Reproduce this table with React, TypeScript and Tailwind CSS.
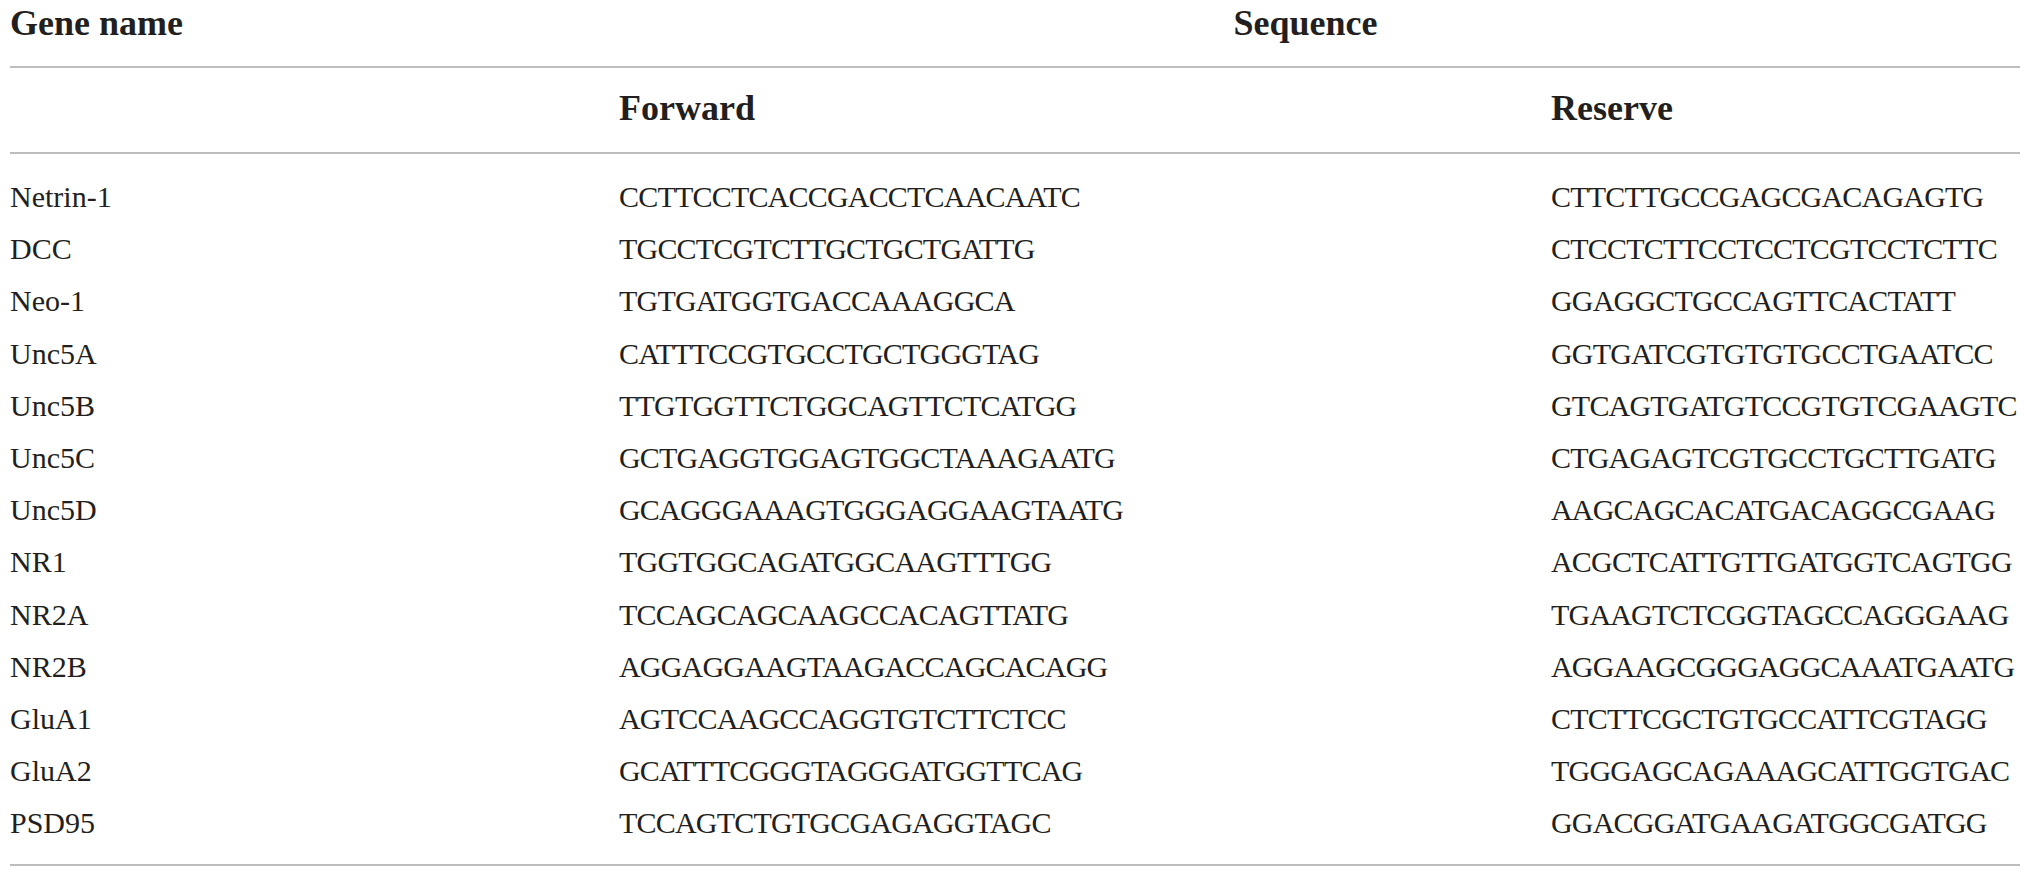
const rows: [string, string, string][] = [
  ["Netrin-1", "CCTTCCTCACCGACCTCAACAATC", "CTTCTTGCCGAGCGACAGAGTG"],
  ["DCC", "TGCCTCGTCTTGCTGCTGATTG", "CTCCTCTTCCTCCTCGTCCTCTTC"],
  ["Neo-1", "TGTGATGGTGACCAAAGGCA", "GGAGGCTGCCAGTTCACTATT"],
  ["Unc5A", "CATTTCCGTGCCTGCTGGGTAG", "GGTGATCGTGTGTGCCTGAATCC"],
  ["Unc5B", "TTGTGGTTCTGGCAGTTCTCATGG", "GTCAGTGATGTCCGTGTCGAAGTC"],
  ["Unc5C", "GCTGAGGTGGAGTGGCTAAAGAATG", "CTGAGAGTCGTGCCTGCTTGATG"],
  ["Unc5D", "GCAGGGAAAGTGGGAGGAAGTAATG", "AAGCAGCACATGACAGGCGAAG"],
  ["NR1", "TGGTGGCAGATGGCAAGTTTGG", "ACGCTCATTGTTGATGGTCAGTGG"],
  ["NR2A", "TCCAGCAGCAAGCCACAGTTATG", "TGAAGTCTCGGTAGCCAGGGAAG"],
  ["NR2B", "AGGAGGAAGTAAGACCAGCACAGG", "AGGAAGCGGGAGGCAAATGAATG"],
  ["GluA1", "AGTCCAAGCCAGGTGTCTTCTCC", "CTCTTCGCTGTGCCATTCGTAGG"],
  ["GluA2", "GCATTTCGGGTAGGGATGGTTCAG", "TGGGAGCAGAAAGCATTGGTGAC"],
  ["PSD95", "TCCAGTCTGTGCGAGAGGTAGC", "GGACGGATGAAGATGGCGATGG"],
];

export default function App() {
  return (
    <div className="min-h-[879px] w-[2030px] bg-white px-[10px] font-['Liberation_Serif',serif] text-[#231f20]">
      <div className="grid grid-cols-[609px_932px_1fr] border-b-2 border-[#bdbdbd] text-[36px] font-bold leading-none">
        <div className="h-[66px] pt-[5px]">Gene name</div>
        <div className="col-span-2 h-[66px] pr-[28px] pt-[5px] text-center">Sequence</div>
      </div>
      <div className="grid grid-cols-[609px_932px_1fr] border-b-2 border-[#bdbdbd] text-[36px] font-bold leading-none">
        <div className="h-[84px]" />
        <div className="h-[84px] pt-[22px]">Forward</div>
        <div className="h-[84px] pt-[22px]">Reserve</div>
      </div>
      <div className="border-b-2 border-[#bdbdbd] pb-[15px] pt-[17px] text-[30px] leading-[52.2px]">
        {rows.map(([gene, forward, reserve]) => (
          <div key={gene} className="grid h-[52.2px] grid-cols-[609px_932px_1fr] whitespace-nowrap">
            <div>{gene}</div>
            <div className="tracking-[-0.8px]">{forward}</div>
            <div className="tracking-[-0.8px]">{reserve}</div>
          </div>
        ))}
      </div>
    </div>
  );
}
